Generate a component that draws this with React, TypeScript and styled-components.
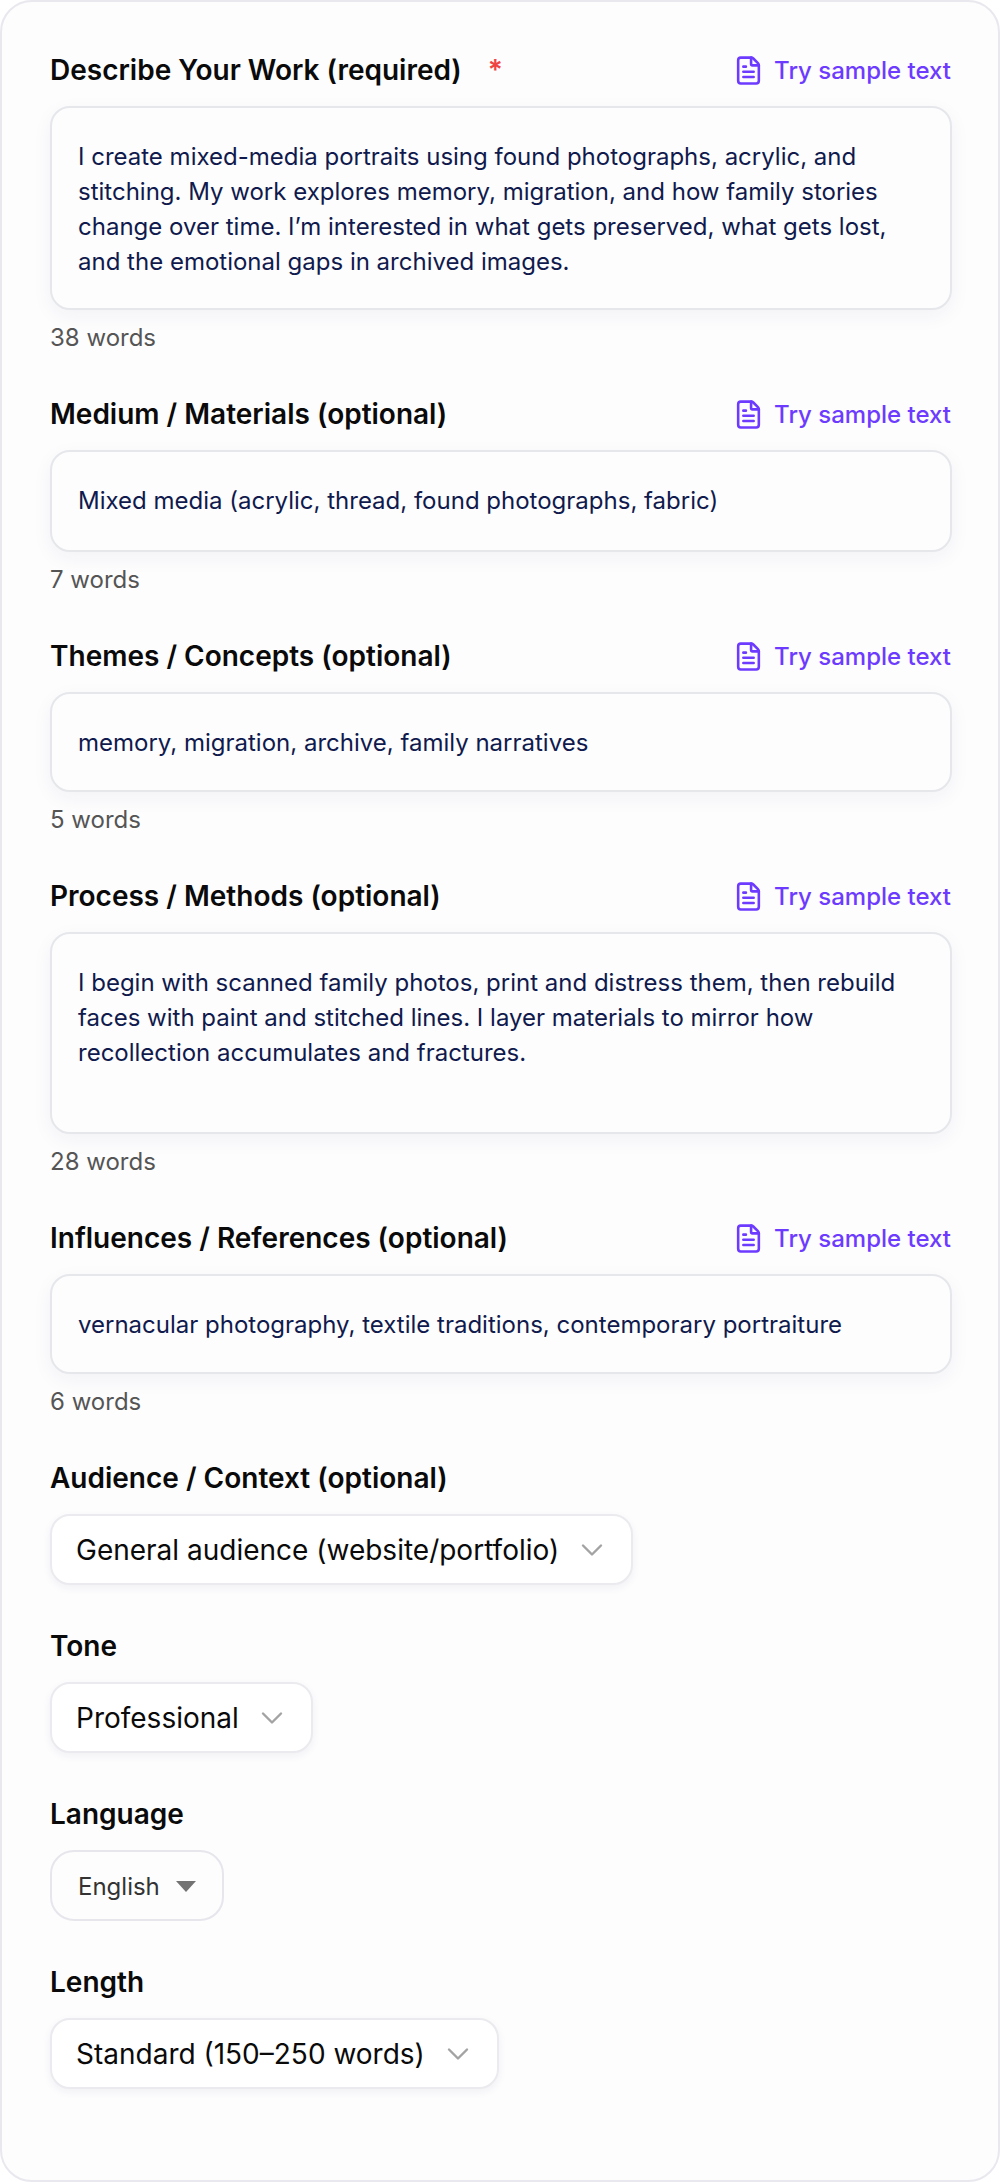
import { FileText, ChevronDown } from 'lucide-react';
import styled, { createGlobalStyle } from 'styled-components';

const GlobalStyle = createGlobalStyle`
  html, body {
    margin: 0;
    padding: 0;
    background: #ffffff;
    font-family: Inter, "Liberation Sans", sans-serif;
  }
  * {
    box-sizing: border-box;
  }
`;

const Card = styled.div`
  width: 1000px;
  height: 2182px;
  padding: 50px 46px 0 48px;
  background: #fdfdfe;
  border: 2px solid #e8e8ee;
  border-radius: 32px;
`;

const Field = styled.div<{ $gap: number }>`
  margin-bottom: ${(props) => props.$gap}px;
`;

const LabelRow = styled.div`
  display: flex;
  align-items: center;
  justify-content: space-between;
  height: 36px;
  margin-bottom: 18px;
`;

const Label = styled.label`
  font-size: 28px;
  font-weight: 600;
  line-height: 36px;
  color: #0a0a0a;
`;

const Required = styled.span`
  margin-left: 26px;
  color: #ef4444;
`;

const SampleLink = styled.a`
  display: flex;
  align-items: center;
  gap: 10px;
  margin-right: 1px;
  font-size: 24px;
  font-weight: 500;
  color: #6d3bff;
`;

const TextBox = styled.div<{ $height: number }>`
  height: ${(props) => props.$height}px;
  padding: 31px 26px 0 26px;
  background: #fdfdfe;
  border: 2px solid #e5e7eb;
  border-radius: 20px;
  box-shadow: 0 6px 20px rgba(30, 40, 80, 0.05);
  font-size: 24px;
  line-height: 35px;
  color: #101a4d;
`;

const WordCount = styled.div`
  margin-top: 14px;
  font-size: 24px;
  line-height: 28px;
  color: #555555;
`;

const SelectButton = styled.div`
  display: inline-flex;
  align-items: center;
  gap: 15px;
  height: 71px;
  padding: 0 21px 0 24px;
  background: #ffffff;
  border: 2px solid #ebebef;
  border-radius: 20px;
  box-shadow: 0 3px 8px rgba(30, 40, 80, 0.06);
  font-size: 28px;
  color: #0a0a0a;

  svg {
    color: #a3a3a3;
  }
`;

const NativeSelect = styled.div`
  display: inline-flex;
  align-items: center;
  gap: 16px;
  height: 71px;
  padding: 2px 26px 0 26px;
  background: #fdfdfe;
  border: 2px solid #e6e6ec;
  border-radius: 24px;
  font-size: 24px;
  color: #333333;
`;

const Caret = styled.span`
  width: 0;
  height: 0;
  border-left: 10px solid transparent;
  border-right: 10px solid transparent;
  border-top: 11px solid #737373;
`;

interface TextFieldProps {
  label: string;
  required?: boolean;
  text: string;
  words: number;
  height: number;
}

function TextField({ label, required, text, words, height }: TextFieldProps) {
  return (
    <Field $gap={44}>
      <LabelRow>
        <Label>
          {label}
          {required && <Required>*</Required>}
        </Label>
        <SampleLink>
          <FileText size={31} />
          Try sample text
        </SampleLink>
      </LabelRow>
      <TextBox $height={height}>{text}</TextBox>
      <WordCount>{words} words</WordCount>
    </Field>
  );
}

function SelectField({ label, value }: { label: string; value: string }) {
  return (
    <Field $gap={43}>
      <LabelRow>
        <Label>{label}</Label>
      </LabelRow>
      <SelectButton>
        {value}
        <ChevronDown size={36} strokeWidth={1.6} />
      </SelectButton>
    </Field>
  );
}

export default function App() {
  return (
    <>
      <GlobalStyle />
      <Card>
        <TextField
          label="Describe Your Work (required)"
          required
          height={204}
          words={38}
          text="I create mixed-media portraits using found photographs, acrylic, and stitching. My work explores memory, migration, and how family stories change over time. I’m interested in what gets preserved, what gets lost, and the emotional gaps in archived images."
        />
        <TextField
          label="Medium / Materials (optional)"
          height={102}
          words={7}
          text="Mixed media (acrylic, thread, found photographs, fabric)"
        />
        <TextField
          label="Themes / Concepts (optional)"
          height={100}
          words={5}
          text="memory, migration, archive, family narratives"
        />
        <TextField
          label="Process / Methods (optional)"
          height={202}
          words={28}
          text="I begin with scanned family photos, print and distress them, then rebuild faces with paint and stitched lines. I layer materials to mirror how recollection accumulates and fractures."
        />
        <TextField
          label="Influences / References (optional)"
          height={100}
          words={6}
          text="vernacular photography, textile traditions, contemporary portraiture"
        />
        <SelectField label="Audience / Context (optional)" value="General audience (website/portfolio)" />
        <SelectField label="Tone" value="Professional" />
        <Field $gap={43}>
          <LabelRow>
            <Label>Language</Label>
          </LabelRow>
          <NativeSelect>
            English
            <Caret />
          </NativeSelect>
        </Field>
        <SelectField label="Length" value="Standard (150–250 words)" />
      </Card>
    </>
  );
}
